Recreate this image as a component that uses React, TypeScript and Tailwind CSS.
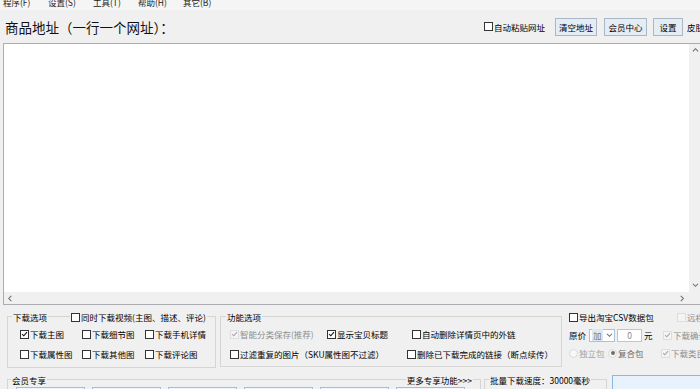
import React from "react";

const menus = ["程序(F)", "设置(S)", "工具(T)", "帮助(H)", "其它(B)"];
const vipButtons = ["", "", "", "", "", ""];

function Tick({ color }: { color: string }) {
  return (
    <svg viewBox="0 0 10 10" className="w-[8px] h-[8px]">
      <path d="M1.6 5.2 L4 7.6 L8.6 2.2" fill="none" stroke={color} strokeWidth="1.5" />
    </svg>
  );
}

function Check({
  label,
  checked = false,
  disabled = false,
  className = "",
}: {
  label: string;
  checked?: boolean;
  disabled?: boolean;
  className?: string;
}) {
  return (
    <div className={`flex items-center h-[14px] whitespace-nowrap shrink-0 ${className}`}>
      <span
        className={`w-[9px] h-[9px] shrink-0 border flex items-center justify-center ${
          disabled ? "border-[#dedede] bg-[#f4f4f4]" : "border-[#333333] bg-white"
        }`}
      >
        {checked && <Tick color={disabled ? "#a6a6a6" : "#111111"} />}
      </span>
      <span className={`ml-[1px] ${disabled ? "text-[#8e8e8e]" : "text-black"}`}>{label}</span>
    </div>
  );
}

function Radio({ label, checked = false, className = "" }: { label: string; checked?: boolean; className?: string }) {
  return (
    <div className={`flex items-center h-[14px] whitespace-nowrap shrink-0 ${className}`}>
      <span className="w-[9px] h-[9px] rounded-full border border-[#dadada] bg-[#f7f7f7] flex items-center justify-center">
        {checked && <span className="w-[4px] h-[4px] rounded-full bg-[#6e6e6e]" />}
      </span>
      <span className={`ml-[1px] ${checked ? "text-[#6a6a6a]" : "text-[#a3a3a3]"}`}>{label}</span>
    </div>
  );
}

function Btn({ children, className = "" }: { children: React.ReactNode; className?: string }) {
  return (
    <div
      className={`h-[18px] shrink-0 flex items-center justify-center border border-[#a9b7c6] bg-[#e4ecf4] whitespace-nowrap ${className}`}
    >
      {children}
    </div>
  );
}

function Chevron({ dir }: { dir: "up" | "down" | "left" | "right" }) {
  const d = {
    up: "M1 5 L4 2 L7 5",
    down: "M1 2 L4 5 L7 2",
    left: "M5 1 L2 4 L5 7",
    right: "M2 1 L5 4 L2 7",
  }[dir];
  return (
    <svg viewBox="0 0 8 8" className="w-[7px] h-[7px]">
      <path d={d} fill="none" stroke="#6b6b6b" strokeWidth="1.2" />
    </svg>
  );
}

export default function App() {
  return (
    <div className="w-[700px] h-[389px] overflow-hidden bg-[#f0f0f0] text-[8.5px] leading-[12px] text-black font-['Noto_Sans_CJK_SC','Noto_Sans',sans-serif]">
      {/* menu bar, top half cut off */}
      <div className="h-[10px] overflow-hidden bg-[#f5f5f5]">
        <div className="flex pl-[3px] -mt-[4px] text-[#222]">
          {menus.map((m) => (
            <div key={m} className="w-[45px] whitespace-nowrap">
              {m}
            </div>
          ))}
        </div>
      </div>

      {/* address title row */}
      <div className="flex items-center h-[33px]">
        <div className="w-[484px] shrink-0 pl-[5px] text-[13.5px] leading-[16px] text-[#111]">商品地址（一行一个网址）：</div>
        <Check label="自动粘贴网址" />
        <Btn className="ml-[10px] w-[42px]">清空地址</Btn>
        <Btn className="ml-[7px] w-[43px]">会员中心</Btn>
        <Btn className="ml-[6px] w-[30px]">设置</Btn>
        <div className="ml-[4px] whitespace-nowrap">皮肤</div>
      </div>

      {/* url textarea */}
      <div className="ml-[3px] w-[699px] h-[262px] border border-[#abadb3] bg-white flex flex-col">
        <div className="flex-1 flex min-h-0">
          <div className="flex-1" />
          <div className="w-[12px] bg-[#f0f0f0] flex flex-col justify-between items-center py-[3px]">
            <Chevron dir="up" />
            <Chevron dir="down" />
          </div>
        </div>
        <div className="h-[12px] flex">
          <div className="flex-1 bg-[#f0f0f0] flex items-center justify-between px-[3px]">
            <Chevron dir="left" />
            <Chevron dir="right" />
          </div>
          <div className="w-[12px] bg-[#f0f0f0]" />
        </div>
      </div>

      {/* option groups */}
      <div className="flex items-start pl-[7px]">
        <div className="mt-[11px] w-[209px] shrink-0 border border-[#d5d5d5] pb-[6px]">
          <div className="flex items-center h-[14px] -mt-[7px]">
            <span className="ml-[4px] px-[1px] bg-[#f0f0f0]">下载选项</span>
            <Check className="ml-[22px] px-[1px] bg-[#f0f0f0]" label="同时下载视频(主图、描述、评论)" />
          </div>
          <div className="mt-[3px] pl-[12px] grid grid-cols-[62px_63px_auto] gap-y-[6px]">
            <Check label="下载主图" checked />
            <Check label="下载细节图" />
            <Check label="下载手机详情" />
            <Check label="下载属性图" />
            <Check label="下载其他图" />
            <Check label="下载评论图" />
          </div>
        </div>

        <div className="mt-[11px] ml-[4px] w-[342px] shrink-0 border border-[#d5d5d5] pb-[5px]">
          <div className="flex items-center h-[14px] -mt-[7px]">
            <span className="ml-[5px] px-[1px] bg-[#f0f0f0]">功能选项</span>
          </div>
          <div className="mt-[3px] pl-[9px] flex flex-col gap-[6px]">
            <div className="flex">
              <Check className="w-[97px]" label="智能分类保存(推荐)" checked disabled />
              <Check className="w-[85px]" label="显示宝贝标题" checked />
              <Check label="自动删除详情页中的外链" />
            </div>
            <div className="flex">
              <Check className="w-[177px]" label="过滤重复的图片（SKU属性图不过滤）" />
              <Check label="删除已下载完成的链接（断点续传）" />
            </div>
          </div>
        </div>

        <div className="mt-[5px] pl-[7px] flex flex-col gap-[4px]">
          <div className="flex">
            <Check className="w-[108px]" label="导出淘宝CSV数据包" />
            <Check label="远程" disabled />
          </div>
          <div className="flex items-center h-[14px]">
            <span className="w-[20px] shrink-0">原价</span>
            <div className="w-[26px] h-[13px] shrink-0 border border-[#a8c2dc] bg-white flex items-center justify-between pl-[2px] pr-[1px]">
              <span className="bg-[#dbe8f5] text-[#7a7a7a] px-[1px]">加</span>
              <Chevron dir="down" />
            </div>
            <div className="ml-[2px] w-[25px] h-[13px] shrink-0 border border-[#b5c8db] bg-white flex items-center justify-center text-[#8a8a8a]">
              0
            </div>
            <span className="ml-[2px] w-[19px] shrink-0">元</span>
            <Check label="下载确认" checked disabled />
          </div>
          <div className="flex">
            <Radio className="w-[39px]" label="独立包" />
            <Radio className="w-[53px]" label="复合包" checked />
            <Check label="下载类目" checked disabled />
          </div>
        </div>
      </div>

      {/* bottom row */}
      <div className="flex items-start pl-[7px]">
        <div className="mt-[11px] w-[474px] shrink-0 border border-[#d5d5d5]">
          <div className="flex items-center justify-between h-[14px] -mt-[7px]">
            <span className="ml-[3px] px-[1px] bg-[#f0f0f0]">会员专享</span>
            <span className="mr-[7px] px-[1px] bg-[#f0f0f0]">更多专享功能&gt;&gt;&gt;</span>
          </div>
          <div className="pl-[8px] flex gap-[7px]">
            {vipButtons.map((b, i) => (
              <div key={i} className="w-[69px] h-[20px] border border-[#9cc0e4] bg-[#eef5fc]">
                {b}
              </div>
            ))}
          </div>
        </div>

        <div className="mt-[11px] ml-[3px] w-[123px] h-[30px] shrink-0 border border-[#d5d5d5]">
          <div className="flex items-center h-[14px] -mt-[7px]">
            <span className="ml-[4px] px-[1px] bg-[#f0f0f0] whitespace-nowrap">批量下载速度：30000毫秒</span>
          </div>
        </div>

        <div className="mt-[7px] ml-[5px] w-[100px] h-[40px] shrink-0 border border-[#8db6e0] bg-[#e8f2fc] flex justify-center pt-[12px] text-[14px] leading-[18px]">
          开始下载
        </div>
      </div>
    </div>
  );
}
